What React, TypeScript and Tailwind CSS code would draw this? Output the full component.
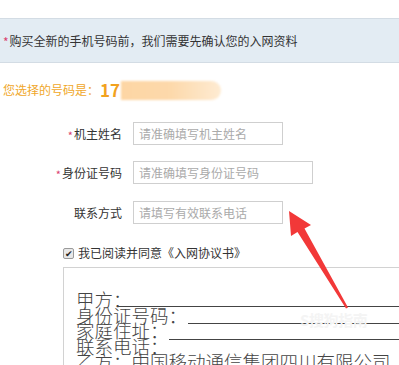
const font = { fontFamily: '"Noto Sans CJK SC", "Noto Sans", sans-serif' };

const FormRow = ({
  label,
  required,
  placeholder,
  width,
  className,
}: {
  label: string;
  required?: boolean;
  placeholder: string;
  width: string;
  className?: string;
}) => (
  <div className={`flex h-[23px] items-center ${className ?? ""}`}>
    <div className="flex h-[23px] w-[122px] items-center justify-end text-[12px] leading-[23px] text-[#333]">
      {required && <span className="mr-[1px] pt-[3px] text-[11px] leading-none text-[#d9416f]">*</span>}
      {label}
    </div>
    <div
      className={`ml-[11px] h-[23px] ${width} border border-[#cfcfcf] pl-[5px] text-[12px] leading-[21px] text-[#aaa]`}
    >
      {placeholder}
    </div>
  </div>
);

const AgreementLine = ({ text, lineClass }: { text: string; lineClass?: string }) => (
  <div className="flex h-[15.5px] items-start overflow-visible whitespace-nowrap">
    <span className="h-[15.5px]">{text}</span>
    {lineClass && <div className={`h-px flex-1 bg-[#444] ${lineClass}`} />}
  </div>
);

export default function App() {
  return (
    <div className="relative h-[365px] w-[399px] overflow-hidden bg-white" style={font}>
      <div className="h-[18px]" />
      <div className="flex h-[45px] items-center border-y border-[#d3dce4] bg-[#e3ecf3] pl-[3px] text-[12px] text-[#333]">
        <span className="mr-[1px] pt-[3px] leading-none text-[#d9416f]">*</span>
        购买全新的手机号码前，我们需要先确认您的入网资料
      </div>

      <div className="mt-[17px] flex h-[20px] items-center pl-[3px]">
        <span className="text-[12px] text-[#f0a72a]">您选择的号码是：</span>
        <span className="ml-[1px] text-[17px] font-bold text-[#f2a21e]">17</span>
        <span className="ml-[1px] h-[19px] w-[100px] rounded-r-full bg-gradient-to-r from-[#fdd6a4] via-[#fdd9ab] to-[#feebd2] blur-[1px]" />
      </div>

      <FormRow className="mt-[22px]" label="机主姓名" required placeholder="请准确填写机主姓名" width="w-[150px]" />
      <FormRow className="mt-[16px]" label="身份证号码" required placeholder="请准确填写身份证号码" width="w-[180px]" />
      <FormRow className="mt-[17px]" label="联系方式" placeholder="请填写有效联系电话" width="w-[150px]" />

      <div className="ml-[63px] mt-[21px] flex h-[16px] items-center text-[12px] leading-[16px] text-[#333]">
        <span className="flex h-[11px] w-[11px] items-center justify-center rounded-[2px] border border-[#9a9a9a] bg-[#e8e8e8] text-[9px] leading-none text-[#222]">
          ✔
        </span>
        <span className="ml-[4px]">我已阅读并同意《入网协议书》</span>
      </div>

      <div className="ml-[63px] mt-[6px] h-[200px] w-[400px] border-l border-t border-[#d2d2d2] bg-white pl-[12px] pt-[24px] text-[18.5px] font-light leading-[15.5px] text-[#444]">
        <AgreementLine text="甲方：" lineClass="-ml-[14px] mt-[14px]" />
        <AgreementLine text="身份证号码：" lineClass="ml-[1px] mt-[15px]" />
        <AgreementLine text="家庭住址：" lineClass="ml-0 mt-[15.5px]" />
        <AgreementLine text="联系电话：" />
        <AgreementLine text="乙方：中国移动通信集团四川有限公司" />
      </div>

      <div className="absolute left-[300px] top-[309px] text-[15px] font-bold tracking-tight text-[#f4f4f4]">
        S搜狗指南
      </div>

      <svg className="absolute left-0 top-0" width="399" height="365" viewBox="0 0 399 365">
        <polygon
          points="289,211 311,225 304.5,228.5 348,307.5 346,308.5 297.5,232 291,236"
          fill="#f23838"
        />
      </svg>
    </div>
  );
}
